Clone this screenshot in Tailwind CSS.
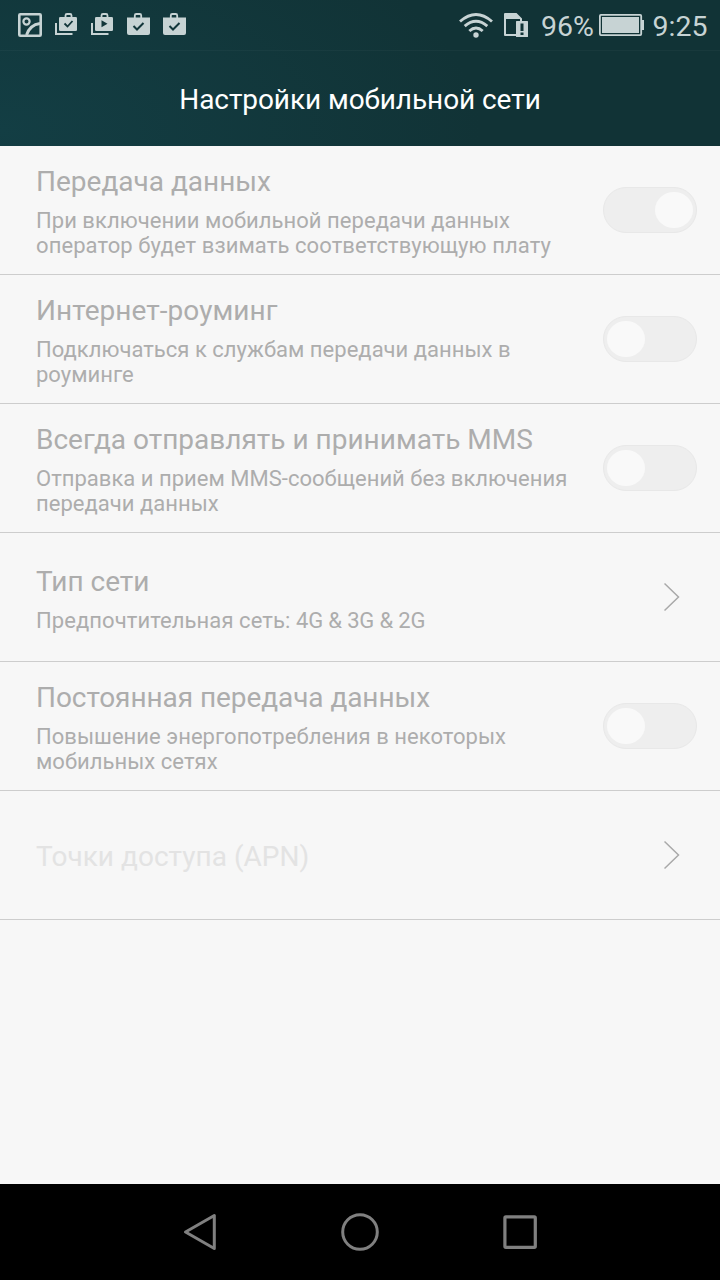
<!DOCTYPE html>
<html lang="ru">
<head>
<meta charset="utf-8">
<title>Настройки мобильной сети</title>
<script src="https://cdn.jsdelivr.net/npm/@tailwindcss/browser@4"></script>
</head>
<body class="flex h-[1280px] w-[720px] flex-col overflow-hidden bg-[#f7f7f7] font-['Roboto',sans-serif]">
<header class="h-[146px] shrink-0 bg-[#113336] bg-[radial-gradient(ellipse_480px_240px_at_0px_130px,#133e44,#113336)] text-[#c7d3d4]">
  <div class="flex h-[51px] items-start justify-between border-b border-white/3">
    <svg class="h-[50px] w-[200px]" viewBox="0 0 200 50" fill="none">
      <rect x="19.3" y="14.3" width="21.4" height="21.4" rx="1" stroke="currentColor" stroke-width="2.6"/>
      <circle cx="26.500" cy="21.500" r="3.100" stroke="currentColor" stroke-width="2.200"/>
      <path d="M26.500 35C28.500 29 32.500 24.500 40 23.500" stroke="currentColor" stroke-width="2.800"/>
      <path d="M56 23V34H72.500" stroke="currentColor" stroke-width="2"/>
      <path d="M65.500 18V15.500Q65.500 14 67 14H70Q71.500 14 71.500 15.500V18" stroke="currentColor" stroke-width="1.8"/>
      <rect x="59" y="17" width="18" height="14" rx="1.300" fill="currentColor"/>
      <path d="M64.500 23.500L67.500 26.500L72.500 21" stroke="#12363a" stroke-width="1.800"/>
      <path d="M92 23V34H108.500" stroke="currentColor" stroke-width="2"/>
      <path d="M101.500 18V15.500Q101.500 14 103 14H106Q107.500 14 107.500 15.500V18" stroke="currentColor" stroke-width="1.8"/>
      <rect x="95" y="17" width="18" height="14" rx="1.300" fill="currentColor"/>
      <path d="M101.500 20.300V27.300L107.500 23.800Z" fill="#12363a"/>
      <path d="M134.800 18V15.500Q134.800 14 136.300 14H139.700Q141.200 14 141.200 15.500V18" stroke="currentColor" stroke-width="1.8"/>
      <path d="M127 17.500H150V33Q150 35 148 35H129Q127 35 127 33Z" fill="currentColor"/>
      <path d="M133.500 26L137 29.500L143.500 23" stroke="#12363a" stroke-width="2"/>
      <path d="M170.800 18V15.500Q170.800 14 172.300 14H175.700Q177.200 14 177.200 15.500V18" stroke="currentColor" stroke-width="1.8"/>
      <path d="M163 17.500H186V33Q186 35 184 35H165Q163 35 163 33Z" fill="currentColor"/>
      <path d="M169.500 26L173 29.500L179.500 23" stroke="#12363a" stroke-width="2"/>
    </svg>
    <div class="flex h-[50px] items-center">
      <svg class="h-[50px] w-[83px]" viewBox="455 0 83 50" fill="none">
        <path d="M460 21.500Q476 7.500 492 21.500M464.700 26.200Q476 16.500 487.300 26.200M469.300 31Q476 25 482.700 31" stroke="currentColor" stroke-width="2.900"/>
        <circle cx="476" cy="35" r="2.700" fill="currentColor"/>
        <path d="M504 14Q504 13 505 13H516.500L522 18.500V22H520V19H506V34H516V36H505Q504 36 504 35Z" fill="currentColor"/>
        <rect x="516" y="21" width="12" height="16" rx=".5" fill="currentColor"/>
        <path d="M520.500 23.500H523.500V31H520.500ZM520.500 32.500H523.500V35H520.500Z" fill="#113336"/>
      </svg>
      <span class="mt-[3px] w-[60px] pl-[3px] text-[28.500px] leading-[50px]">96%</span>
      <svg class="h-[50px] w-[54px]" viewBox="598 0 54 50" fill="none">
        <rect x="599.900" y="14.900" width="41.300" height="20.200" rx="1" stroke="currentColor" stroke-width="1.800"/>
        <rect x="602" y="17" width="37" height="16" fill="currentColor"/>
        <path d="M642 20H644V30H642Z" fill="currentColor"/>
      </svg>
      <span class="mt-[3px] w-[68px] pl-[0.500px] text-[28.500px] leading-[50px]">9:25</span>
    </div>
  </div>
  <h1 class="pt-[32px] text-center text-[28px] leading-[33px] tracking-[-0.07px] text-white">Настройки мобильной сети</h1>
</header>
<main class="flex-1 text-[#adadad]">
  <section class="flex h-[129px] justify-between border-b border-[#cdcdcd] pr-[23px] pl-[36px]">
    <div class="whitespace-nowrap pt-[19px]"><h2 class="text-[28px] leading-[33px]">Передача данных</h2>
      <p class="pt-[10px] text-[22px] leading-[25px]"><span class="tracking-[0.04px]">При включении мобильной передачи данных</span><br><span class="tracking-[0.09px]">оператор будет взимать соответствующую плату</span></p></div>
    <div class="mt-[41px] flex h-[46px] w-[94px] justify-end rounded-full border border-[#e8e8e8] bg-[#eeeeee] px-[3px] py-[4px]"><i class="h-[36px] w-[38px] rounded-[50%] bg-[#f9f9f9]"></i></div>
  </section>
  <section class="flex h-[129px] justify-between border-b border-[#cdcdcd] pr-[23px] pl-[36px]">
    <div class="whitespace-nowrap pt-[19px]"><h2 class="text-[28px] leading-[33px] tracking-[0.05px]">Интернет-роуминг</h2>
      <p class="pt-[10px] text-[22px] leading-[25px] tracking-[0.02px]">Подключаться к службам передачи данных в<br>роуминге</p></div>
    <div class="mt-[41px] flex h-[46px] w-[94px] rounded-full border border-[#e8e8e8] bg-[#eeeeee] px-[3px] py-[4px]"><i class="h-[36px] w-[38px] rounded-[50%] bg-[#f9f9f9]"></i></div>
  </section>
  <section class="flex h-[129px] justify-between border-b border-[#cdcdcd] pr-[23px] pl-[36px]">
    <div class="whitespace-nowrap pt-[19px]"><h2 class="text-[28px] leading-[33px]">Всегда отправлять и принимать MMS</h2>
      <p class="pt-[10px] text-[22px] leading-[25px] tracking-[0.02px]">Отправка и прием MMS-сообщений без включения<br>передачи данных</p></div>
    <div class="mt-[41px] flex h-[46px] w-[94px] rounded-full border border-[#e8e8e8] bg-[#eeeeee] px-[3px] py-[4px]"><i class="h-[36px] w-[38px] rounded-[50%] bg-[#f9f9f9]"></i></div>
  </section>
  <section class="flex h-[129px] justify-between border-b border-[#cdcdcd] pr-[40px] pl-[36px]">
    <div class="whitespace-nowrap pt-[32px]"><h2 class="text-[28px] leading-[33px]">Тип сети</h2>
      <p class="pt-[10px] text-[22px] leading-[25px]"><span class="tracking-[0.08px]">Предпочтительная сеть: </span><span class="tracking-[-0.15px]">4G &amp; 3G &amp; 2G</span></p></div>
    <svg class="mt-[49px] h-[30px] w-[16px]" viewBox="0 0 16 30" fill="none" stroke="#a9a9a9" stroke-width="1.500"><path d="M.5 1.500L14.500 15L.5 28.500"/></svg>
  </section>
  <section class="flex h-[129px] justify-between border-b border-[#cdcdcd] pr-[23px] pl-[36px]">
    <div class="whitespace-nowrap pt-[19px]"><h2 class="text-[28px] leading-[33px] tracking-[-0.07px]">Постоянная передача данных</h2>
      <p class="pt-[10px] text-[22px] leading-[25px] tracking-[0.04px]">Повышение энергопотребления в некоторых<br>мобильных сетях</p></div>
    <div class="mt-[41px] flex h-[46px] w-[94px] rounded-full border border-[#e8e8e8] bg-[#eeeeee] px-[3px] py-[4px]"><i class="h-[36px] w-[38px] rounded-[50%] bg-[#f9f9f9]"></i></div>
  </section>
  <section class="flex h-[129px] justify-between border-b border-[#cdcdcd] pr-[40px] pl-[36px]">
    <h2 class="whitespace-nowrap pt-[49px] text-[28px] leading-[33px] tracking-[0.03px] text-[#e3e3e3]">Точки доступа (APN)</h2>
    <svg class="mt-[49px] h-[30px] w-[16px]" viewBox="0 0 16 30" fill="none" stroke="#a9a9a9" stroke-width="1.500"><path d="M.5 1.500L14.500 15L.5 28.500"/></svg>
  </section>
</main>
<nav class="flex h-[96px] shrink-0 items-center justify-center gap-[120px] bg-black text-[#808080]">
  <svg class="size-[40px]" viewBox="0 0 40 40" fill="none" stroke="currentColor" stroke-width="3" stroke-linejoin="round"><path d="M5.500 20L34.300 3.500V36.500Z"/></svg>
  <svg class="size-[40px]" viewBox="0 0 40 40" fill="none" stroke="currentColor" stroke-width="3"><circle cx="20" cy="20" r="17.300"/></svg>
  <svg class="size-[40px]" viewBox="0 0 40 40" fill="none" stroke="currentColor" stroke-width="3.200"><rect x="4.900" y="4.900" width="30.400" height="30.400" rx="1"/></svg>
</nav>
</body>
</html>
